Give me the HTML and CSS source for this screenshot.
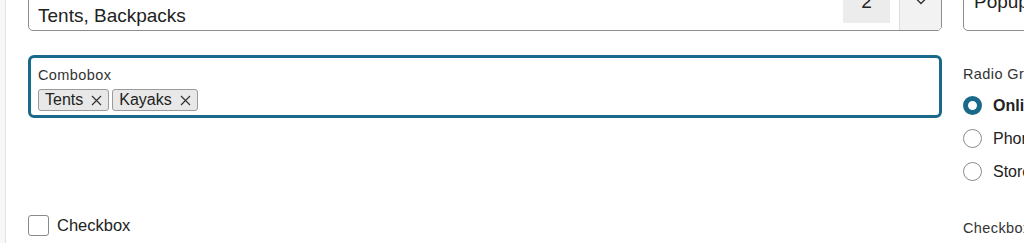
FILE: index.html
```html
<!DOCTYPE html>
<html>
<head>
<meta charset="utf-8">
<link rel="stylesheet" href="styles.css">
</head>
<body>
<div class="page">
  <div class="rail"></div>
  <div class="content">
    <div class="col main">
      <div class="field multi">
        <span class="value">Tents, Backpacks</span>
        <span class="count">2</span>
        <span class="chev">
          <svg width="12" height="8" viewBox="0 0 12 8"><path d="M1 1.5 L6 6.5 L11 1.5" fill="none" stroke="#333" stroke-width="1.4"/></svg>
        </span>
      </div>
      <div class="combo">
        <div class="label">Combobox</div>
        <div class="tags">
          <span class="tag">Tents<svg class="x" width="11" height="11" viewBox="0 0 11 11"><path d="M1 1 L10 10 M10 1 L1 10" stroke="#333" stroke-width="1.2"/></svg></span>
          <span class="tag">Kayaks<svg class="x" width="11" height="11" viewBox="0 0 11 11"><path d="M1 1 L10 10 M10 1 L1 10" stroke="#333" stroke-width="1.2"/></svg></span>
        </div>
      </div>
      <label class="check">
        <span class="box"></span>
        <span class="check-text">Checkbox</span>
      </label>
    </div>
    <div class="col side">
      <div class="field popup"><span class="popup-text">Popup</span></div>
      <div class="radio-group">
        <div class="label">Radio Group</div>
        <div class="radio selected"><span class="circle"></span><span class="radio-text">Online</span></div>
        <div class="radio"><span class="circle"></span><span class="radio-text">Phone</span></div>
        <div class="radio"><span class="circle"></span><span class="radio-text">Store</span></div>
      </div>
      <div class="label side-check">Checkbox</div>
    </div>
  </div>
</div>
</body>
</html>
```

FILE: styles.css
```css
* { box-sizing: border-box; }
html, body { margin: 0; padding: 0; background: #fff; overflow: hidden; }
body { font-family: "Liberation Sans", Arial, sans-serif; color: #222; width: 1024px; height: 243px; }

.page { display: flex; height: 243px; }
.rail { width: 6px; flex: none; background: #f7f7f7; border-right: 1px solid #e4e4e4; }
.content {
  display: grid;
  grid-template-columns: 914px 200px;
  column-gap: 21px;
  padding-left: 22px;
  margin-top: -13px;
  align-items: start;
}
.col { display: flex; flex-direction: column; }

.field {
  border: 1px solid #8d8d8d;
  border-radius: 5px;
  height: 44px;
  display: flex;
  align-items: flex-start;
  overflow: hidden;
  background: #fff;
}
.multi .value {
  font-size: 19px;
  line-height: 22px;
  padding: 17px 0 0 9px;
  flex: 1;
}
.count {
  width: 47px;
  height: 35px;
  background: #ececec;
  font-size: 19px;
  line-height: 22px;
  text-align: center;
  padding-top: 3px;
  margin-right: 9px;
  color: #222;
}
.chev {
  width: 42px;
  align-self: stretch;
  background: #f2f2f2;
  border-left: 1px solid #dcdcdc;
  display: flex;
  justify-content: center;
  padding-top: 9px;
}

.label { font-size: 14.5px; line-height: 16px; letter-spacing: 0.4px; color: #333; }

.combo {
  margin-top: 24px;
  height: 63px;
  border: 3px solid #19698a;
  border-radius: 6px;
  padding: 9px 7px 0;
}
.tags { display: flex; gap: 3px; margin-top: 6px; }
.tag {
  display: flex;
  align-items: center;
  gap: 8px;
  height: 22px;
  padding: 0 6px 0 6px;
  background: #e8e8e8;
  border: 1px solid #9a9a9a;
  border-radius: 3px;
  font-size: 16px;
  line-height: 20px;
  color: #222;
}
.tag .x { flex: none; }

.check {
  display: flex;
  align-items: center;
  gap: 8px;
  margin-top: 97px;
}
.box {
  width: 21px;
  height: 21px;
  border: 1px solid #8a8a8a;
  border-radius: 3px;
  background: #fff;
}
.check-text { font-size: 16.5px; line-height: 21px; color: #222; }

.popup .popup-text {
  font-size: 19px;
  line-height: 22px;
  padding: 3px 0 0 10px;
}

.radio-group { margin-top: 35px; }
.radio {
  display: flex;
  align-items: center;
  gap: 11px;
  height: 33px;
}
.radio-group .label { margin-bottom: 7px; }
.circle {
  width: 19px;
  height: 19px;
  border-radius: 50%;
  border: 1px solid #8a8a8a;
  background: #fff;
  flex: none;
}
.radio.selected .circle { border: 5px solid #19698a; }
.radio-text { font-size: 16px; color: #222; white-space: nowrap; }
.radio.selected .radio-text { font-weight: bold; }

.side-check { margin-top: 32px; }
```
